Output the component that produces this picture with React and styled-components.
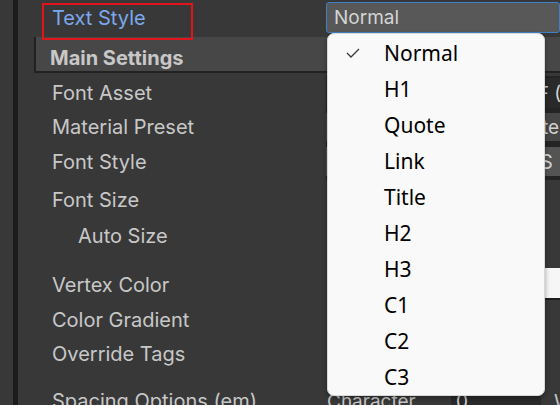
import React from 'react';
import styled, { createGlobalStyle } from 'styled-components';

const GlobalStyle = createGlobalStyle`
  html, body {
    margin: 0;
    padding: 0;
    background: #383838;
    overflow: hidden;
  }
  body {
    font-family: Inter, "Noto Sans", sans-serif;
  }
`;

const STYLES = ['Normal', 'H1', 'Quote', 'Link', 'Title', 'H2', 'H3', 'C1', 'C2', 'C3'];

const App = () => {
  return (
    <Window>
      <GlobalStyle />
      <Gutter />
      <Inspector>
        <Row $h={36}>
          <Label $accent>Text Style</Label>
          <Value>
            <PopupField>Normal</PopupField>
          </Value>
          <Highlight />
        </Row>

        <Header>Main Settings</Header>

        <Row $h={34} $top={3}>
          <Label>Font Asset</Label>
          <Value $dark>
            <ObjectField>
              <AssetIcon />
              LiberationSans SDF (TMP_Font Asset)
            </ObjectField>
          </Value>
        </Row>
        <Row $h={34}>
          <Label>Material Preset</Label>
          <Value $dark>
            <PresetField>LiberationSans SDF Material</PresetField>
          </Value>
        </Row>
        <Row $h={36}>
          <Label>Font Style</Label>
          <Value $dark>
            <StyleStrip>
              <StyleButton>B</StyleButton>
              <StyleButton>I</StyleButton>
              <StyleButton>U</StyleButton>
              <StyleButton>S</StyleButton>
            </StyleStrip>
          </Value>
        </Row>
        <Row $h={39}>
          <Label>Font Size</Label>
          <Value />
        </Row>
        <Row $h={34}>
          <Label $indent={26}>Auto Size</Label>
          <Value />
        </Row>

        <Row $h={34} $top={15}>
          <Label>Vertex Color</Label>
          <Value>
            <ColorField />
          </Value>
        </Row>
        <Row $h={35}>
          <Label>Color Gradient</Label>
          <Value />
        </Row>
        <Row $h={34}>
          <Label>Override Tags</Label>
          <Value />
        </Row>

        <Row $h={34} $top={13}>
          <Label>Spacing Options (em)</Label>
          <Value>
            <SubLabel>Character</SubLabel>
            <NumberField>0</NumberField>
            <SubLabel>Word</SubLabel>
          </Value>
        </Row>

        <Dropdown>
          {STYLES.map((name, i) => (
            <Item key={name}>
              {i === 0 && (
                <Check viewBox="0 0 14 10" width="14" height="10">
                  <polyline points="1,5 5,9 13,1" fill="none" stroke="#3a3a3a" strokeWidth="1.3" />
                </Check>
              )}
              {name}
            </Item>
          ))}
        </Dropdown>
      </Inspector>
    </Window>
  );
};

export default App;

const Window = styled.div`
  display: flex;
  width: 560px;
  height: 405px;
  overflow: hidden;
  background: #383838;
`;

const Gutter = styled.div`
  width: 13px;
  flex-shrink: 0;
  background: #383838;
  border-right: 5px solid #1c1c1c;
`;

const Inspector = styled.div`
  position: relative;
  flex: 1;
  min-width: 0;
  display: flex;
  flex-direction: column;
`;

const Row = styled.div`
  position: relative;
  display: flex;
  align-items: stretch;
  height: ${(p) => p.$h}px;
  margin-top: ${(p) => p.$top || 0}px;
  flex-shrink: 0;
`;

const Label = styled.div`
  width: 308px;
  flex-shrink: 0;
  box-sizing: border-box;
  padding-left: ${(p) => 34 + (p.$indent || 0)}px;
  display: flex;
  align-items: center;
  font-size: 20px;
  color: ${(p) => (p.$accent ? '#7ba9ee' : '#c8c8c8')};
  white-space: nowrap;
`;

const Value = styled.div`
  flex: 1;
  min-width: 0;
  display: flex;
  align-items: center;
  overflow: hidden;
  background: ${(p) => (p.$dark ? '#242424' : 'transparent')};
`;

const Highlight = styled.div`
  position: absolute;
  left: 24px;
  top: 3px;
  width: 151px;
  height: 37px;
  box-sizing: border-box;
  border: 2px solid #e3131c;
  pointer-events: none;
`;

const PopupField = styled.div`
  align-self: flex-start;
  margin-top: 2px;
  height: 31px;
  width: 100%;
  box-sizing: border-box;
  padding-left: 7px;
  display: flex;
  align-items: center;
  background: #585858;
  border: 1px solid #3f80c6;
  border-radius: 3px;
  color: #d4d4d4;
  font-size: 19px;
  white-space: nowrap;
`;

const Header = styled.div`
  margin: 1px 0 0 16px;
  height: 36px;
  box-sizing: border-box;
  padding: 7px 0 0 14px;
  display: flex;
  align-items: center;
  background: #474747;
  border-left: 2px solid #222;
  border-bottom: 2px solid #222;
  color: #c8c8c8;
  font-size: 20px;
  font-weight: 700;
  flex-shrink: 0;
`;

const ObjectField = styled.div`
  height: 30px;
  width: 100%;
  box-sizing: border-box;
  padding-left: 24px;
  display: flex;
  align-items: center;
  gap: 9px;
  background: #2a2a2a;
  color: #d2d2d2;
  font-size: 19px;
  white-space: nowrap;
`;

const AssetIcon = styled.span`
  width: 14px;
  height: 14px;
  flex-shrink: 0;
  border-radius: 2px;
  background: #8a8a8a;
`;

const PresetField = styled.div`
  height: 28px;
  width: 100%;
  box-sizing: border-box;
  padding-left: 7px;
  display: flex;
  align-items: center;
  background: #464646;
  color: #d2d2d2;
  font-size: 19px;
  white-space: nowrap;
`;

const StyleStrip = styled.div`
  height: 29px;
  width: 100%;
  margin-bottom: 1px;
  display: flex;
  background: #545454;
`;

const StyleButton = styled.div`
  width: 63px;
  flex-shrink: 0;
  display: flex;
  align-items: center;
  justify-content: center;
  color: #d2d2d2;
  font-size: 20px;
`;

const ColorField = styled.div`
  align-self: flex-start;
  flex: 1;
  margin-left: 4px;
  height: 30px;
  background: #f6f6f6;
  border-bottom: 2px solid #1e1e1e;
`;

const SubLabel = styled.div`
  width: 124px;
  flex-shrink: 0;
  padding-left: 1px;
  color: #c8c8c8;
  font-size: 19px;
  white-space: nowrap;
`;

const NumberField = styled.div`
  width: 90px;
  margin-right: 12px;
  height: 28px;
  flex-shrink: 0;
  box-sizing: border-box;
  padding-left: 5px;
  display: flex;
  align-items: center;
  background: #2a2a2a;
  color: #d2d2d2;
  font-size: 19px;
`;

const Dropdown = styled.div`
  position: absolute;
  left: 309px;
  top: 33px;
  width: 218px;
  height: 363px;
  box-sizing: border-box;
  padding-top: 1px;
  background: #f9f9f9;
  border: 1px solid #d8d8d8;
  border-radius: 7px;
  box-shadow: 0 2px 5px rgba(0, 0, 0, 0.35);
  overflow: hidden;
`;

const Item = styled.div`
  position: relative;
  height: 36px;
  box-sizing: border-box;
  padding-left: 56px;
  display: flex;
  align-items: center;
  font-family: "Noto Sans", sans-serif;
  font-size: 21px;
  color: #000;
`;

const Check = styled.svg`
  position: absolute;
  left: 18px;
  top: 13px;
`;
